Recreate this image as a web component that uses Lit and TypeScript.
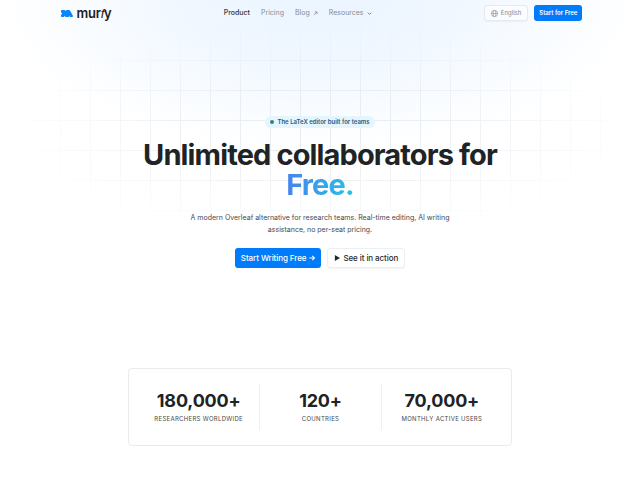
import { LitElement, html, css } from "lit";
import { customElement, property } from "lit/decorators.js";

@customElement("site-header")
class SiteHeader extends LitElement {
  static styles = css`
    :host { display: block; }
    .bar { display: flex; justify-content: space-between; align-items: center; height: 26px; padding: 0 9%; }
    .logo { display: flex; align-items: center; gap: 4px; padding-left: 3px; color: #202124; text-decoration: none; font-size: 13px; line-height: 16px; font-weight: 600; letter-spacing: -0.02em; }
    .mark { width: 12px; height: 7px; }
    .slant { font-family: "Liberation Sans", sans-serif; font-style: italic; font-weight: 400; }
    .links { display: flex; gap: 11px; font-size: 7px; line-height: 12px; }
    .link { display: flex; align-items: center; gap: 3px; color: #858c94; text-decoration: none; }
    .current { color: #303236; font-weight: 500; }
    .tiny { width: 5px; height: 5px; }
    .actions { display: flex; justify-content: flex-end; gap: 6px; }
    .btn { display: flex; align-items: center; justify-content: center; box-sizing: border-box; height: 16px; font: 400 6px/10px Inter, sans-serif; white-space: nowrap; border-radius: 3px; }
    .lang { gap: 3px; padding: 0 6px; border: 1px solid #e6ebf0; background: #fafcff; color: #858c94; box-shadow: 0 1px 1px #0000000a; }
    .globe { width: 7px; height: 7px; }
    .start { padding: 0 5px; border: 0; background: #007bfa; color: #fff; font-weight: 600; }
  `;
  render() {
    return html`<header class="bar">
      <a class="logo" href="#" aria-label="murfy">
        <svg class="mark" viewBox="0 0 12 7"><path fill="#0787fb" d="M0 .8Q0 0 .8 0H3.4Q4 0 4.4.5L5 1.3V.8Q5 0 5.8 0H8Q8.6 0 9 .6L11.8 5.4Q12.4 7 11 7H9.7Q9 7 8.6 6.4L8 5.5V6.2Q8 7 7.2 7H5.3Q4.6 7 4.2 6.4L3.8 5.8 3.3 6.5Q3 7 2.4 7H.8Q0 7 0 6.2V5L1.1 3.5 0 2Z"/></svg>
        <span>mur<span class="slant">f</span>y</span>
      </a>
      <nav class="links">
        <a class="link current" href="#product">Product</a>
        <a class="link" href="#pricing">Pricing</a>
        <a class="link" href="#blog">Blog
          <svg class="tiny" viewBox="0 0 5 5" fill="none" stroke="currentColor" stroke-width=".8"><path d="M.9 4 3.9 1M1.9.9H4V3"/></svg></a>
        <a class="link" href="#resources">Resources
          <svg class="tiny" viewBox="0 0 5 5" fill="none" stroke="currentColor"><path d="M.7 1.7 2.5 3.3 4.3 1.7"/></svg></a>
      </nav>
      <div class="actions">
        <button class="btn lang">
          <svg class="globe" viewBox="0 0 8 8" fill="none" stroke="currentColor" stroke-width=".7"><circle cx="4" cy="4" r="3.6"/><ellipse cx="4" cy="4" rx="1.6" ry="3.6"/><path d="M.4 4H7.6"/></svg>
          English
        </button>
        <button class="btn start">Start for Free</button>
      </div>
    </header>`;
  }
}

@customElement("hero-section")
class HeroSection extends LitElement {
  static styles = css`
    :host { display: flex; flex-direction: column; align-items: center; padding: 90px 20px 0; text-align: center; }
    .badge { display: flex; align-items: center; gap: 3px; height: 12px; padding: 0 5px; border-radius: 6px; background: #e4f5fe; color: #2d5878; font-size: 6px; line-height: 12px; font-weight: 600; }
    .dot { width: 4px; height: 4px; border-radius: 50%; background: #388078; }
    .title { margin: 12px 0 0; max-width: 384px; font-size: 29px; line-height: 30px; font-weight: 700; letter-spacing: -0.03em; color: #202326; }
    .free { color: transparent; background: linear-gradient(90deg, #4683ed, #27c2e5); background-clip: text; -webkit-background-clip: text; }
    .lead { margin: 12px 0 0; max-width: 288px; font-size: 7px; line-height: 12px; color: #45484c; }
    .cta { display: flex; gap: 6px; margin-top: 12px; }
    .btn { display: flex; align-items: center; gap: 3px; box-sizing: border-box; height: 20px; padding: 0 6px; border-radius: 3px; font: 500 8px/12px Inter, sans-serif; letter-spacing: -0.01em; white-space: nowrap; }
    .primary { border: 0; background: #007bfa; color: #fff; }
    .secondary { border: 1px solid #edf0f2; background: #fff; color: #25282b; box-shadow: 0 1px 1px #0000000a; }
    .icon { width: 6px; height: 6px; }
  `;
  render() {
    return html`
      <div class="badge"><span class="dot"></span>The LaTeX editor built for teams</div>
      <h1 class="title">Unlimited collaborators for <span class="free">Free.</span></h1>
      <p class="lead">A modern Overleaf alternative for research teams. Real-time editing, AI writing assistance, no per-seat pricing.</p>
      <div class="cta">
        <button class="btn primary">Start Writing Free
          <svg class="icon" viewBox="0 0 7 7" fill="none" stroke="currentColor" stroke-width="1.2"><path d="M.3 3.5H6.3M3.8 1 6.3 3.5 3.8 6"/></svg></button>
        <button class="btn secondary">
          <svg class="icon" viewBox="0 0 7 7" fill="currentColor"><path d="M1 0 7 3.5 1 7Z"/></svg>See it in action</button>
      </div>`;
  }
}

@customElement("stat-item")
class StatItem extends LitElement {
  @property() value = "";
  @property() label = "";
  static styles = css`
    :host { display: flex; flex-direction: column; align-items: center; justify-content: center; height: 46px; }
    .value { font-size: 18px; line-height: 20px; font-weight: 700; letter-spacing: -0.01em; color: #202326; }
    .label { margin-top: 4px; font-size: 6px; line-height: 8px; letter-spacing: 0.05em; text-transform: uppercase; color: #45484c; white-space: nowrap; }
  `;
  render() {
    return html`<div class="value">${this.value}</div><div class="label">${this.label}</div>`;
  }
}

@customElement("app-root")
class AppRoot extends LitElement {
  static styles = css`
    :host { display: block; min-height: 100vh; font-family: Inter, sans-serif; background: #fff; }
    .page { position: relative; isolation: isolate; min-height: 100vh; }
    .glow, .grid { position: absolute; inset: 0 0 auto; z-index: -1; }
    .glow { height: 150px; background: radial-gradient(50% 100% at 50% 0, #ebf5ff 0%, #f0f7ff 40%, #f9fcff 75%, #fff0 100%); }
    .grid {
      height: 240px;
      background: linear-gradient(90deg, #dce4ea 1px, transparent 1px) 0 0 / 30px 30px, linear-gradient(#dce4ea 1px, transparent 1px) 0 0 / 30px 30px;
      mask-image: radial-gradient(50% 46% at 50% 54%, #000b 0%, #0008 40%, transparent 100%);
    }
    .stats { display: grid; grid-template-columns: repeat(3, 1fr); box-sizing: border-box; width: 60%; margin: 100px auto 0; padding: 15px 9px; border: 1px solid #e9ebed; border-radius: 4px; background: #fff; }
    .divided { border-left: 1px solid #edeff1; }
  `;
  render() {
    const stats = [
      ["180,000+", "Researchers worldwide"],
      ["120+", "Countries"],
      ["70,000+", "Monthly active users"],
    ];
    return html`<main class="page">
      <div class="glow"></div>
      <div class="grid"></div>
      <site-header></site-header>
      <hero-section></hero-section>
      <section class="stats">
        ${stats.map(([value, label], i) => html`<stat-item class=${i ? "divided" : ""} value=${value} label=${label}></stat-item>`)}
      </section>
    </main>`;
  }
}
